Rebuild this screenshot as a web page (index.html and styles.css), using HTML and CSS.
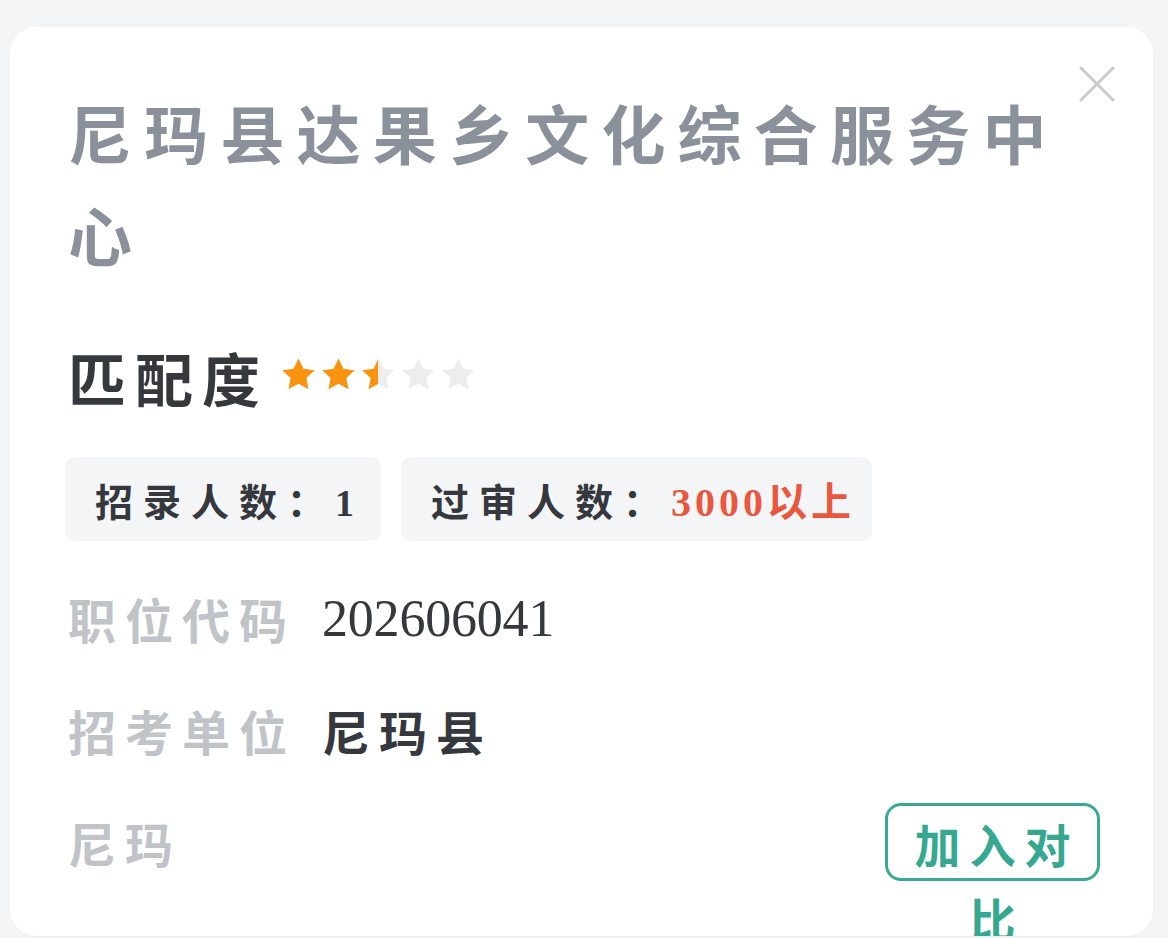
FILE: index.html
```html
<!DOCTYPE html>
<html>
<head>
    <meta charset="utf-8">
    <link rel="stylesheet" href="styles.css">
</head>
<body>

<div class="card">
    <svg class="close" width="36" height="36" viewBox="0 0 36 36">
        <path d="M2 2 L34 34 M34 2 L2 34" stroke="#c9cacd" stroke-width="3" stroke-linecap="round" fill="none"/>
    </svg>

    <h1 class="title">尼玛县达果乡文化综合服务中心</h1>

    <div class="match">
        <span class="match-label">匹配度</span>
        <div class="stars">
            <svg width="33" height="32" viewBox="2.4 2 19.2 18.4"><path class="star on" d="M12 2.2l2.9 6 6.5.8-4.8 4.5 1.2 6.5L12 16.9l-5.8 3.1 1.2-6.5L2.6 9l6.5-.8z"/></svg>
            <svg width="33" height="32" viewBox="2.4 2 19.2 18.4"><path class="star on" d="M12 2.2l2.9 6 6.5.8-4.8 4.5 1.2 6.5L12 16.9l-5.8 3.1 1.2-6.5L2.6 9l6.5-.8z"/></svg>
            <svg width="33" height="32" viewBox="2.4 2 19.2 18.4">
                <defs>
                    <linearGradient id="half">
                        <stop offset="50%" stop-color="#f7930f"/>
                        <stop offset="50%" stop-color="#ededed"/>
                    </linearGradient>
                </defs>
                <path fill="url(#half)" d="M12 2.2l2.9 6 6.5.8-4.8 4.5 1.2 6.5L12 16.9l-5.8 3.1 1.2-6.5L2.6 9l6.5-.8z"/>
            </svg>
            <svg width="33" height="32" viewBox="2.4 2 19.2 18.4"><path class="star" d="M12 2.2l2.9 6 6.5.8-4.8 4.5 1.2 6.5L12 16.9l-5.8 3.1 1.2-6.5L2.6 9l6.5-.8z"/></svg>
            <svg width="33" height="32" viewBox="2.4 2 19.2 18.4"><path class="star" d="M12 2.2l2.9 6 6.5.8-4.8 4.5 1.2 6.5L12 16.9l-5.8 3.1 1.2-6.5L2.6 9l6.5-.8z"/></svg>
        </div>
    </div>

    <div class="tags">
        <div class="tag">招录人数：1</div>
        <div class="tag">过审人数：<span class="hot">3000以上</span></div>
    </div>

    <div class="row">
        <span class="label">职位代码</span>
        <span class="value num">202606041</span>
    </div>
    <div class="row">
        <span class="label">招考单位</span>
        <span class="value">尼玛县</span>
    </div>
    <div class="row last">
        <span class="label">尼玛</span>
        <button class="compare">加入对比</button>
    </div>
</div>

</body>
</html>
```

FILE: styles.css
```css
body {
    margin: 0;
    padding: 27px 15px 0 10px;
    background-color: #f4f5f7;
    font-family: "Liberation Serif", "Noto Sans CJK SC", serif;
    overflow: hidden;
    height: 938px;
    box-sizing: border-box;
}
.card {
    position: relative;
    background-color: #fff;
    border-radius: 26px;
    height: 909px;
    padding: 60px 58px 0 58px;
    box-sizing: border-box;
    box-shadow: 0 1px 3px rgba(0,0,0,0.04);
    overflow: hidden;
}
.close {
    position: absolute;
    top: 39px;
    right: 38px;
}
.title {
    margin: 0;
    width: 1010px;
    font-size: 64px;
    line-height: 102px;
    letter-spacing: 12.2px;
    font-weight: 700;
    color: #8b919b;
}
.match {
    display: flex;
    align-items: center;
    margin-top: 51px;
    height: 70px;
}
.match-label {
    font-size: 58px;
    letter-spacing: 9px;
    font-weight: 700;
    color: #35383d;
}
.stars {
    display: flex;
    gap: 7px;
    margin-left: 13px;
    margin-top: -6px;
}
.star {
    fill: #ededed;
}
.star.on {
    fill: #f7930f;
}
.tags {
    display: flex;
    gap: 20px;
    margin: 45px 0 21px -3px;
}
.tag {
    height: 84px;
    display: flex;
    align-items: center;
    padding: 0 17px 0 30px;
    background-color: #f4f5f7;
    border-radius: 10px;
    font-size: 38px;
    letter-spacing: 10px;
    font-weight: 700;
    color: #35383d;
}
.tag .hot {
    color: #e9573f;
    letter-spacing: 4px;
    font-weight: 700;
    font-size: 40px;
}
.row {
    display: flex;
    align-items: center;
    height: 112px;
}
.label {
    font-size: 48px;
    letter-spacing: 9px;
    font-weight: 700;
    color: #c0c3c8;
    margin-right: 26px;
}
.value {
    font-size: 48px;
    letter-spacing: 9px;
    font-weight: 700;
    color: #35383d;
}
.value.num {
    font-size: 52px;
    letter-spacing: -0.2px;
    font-weight: 400;
}
.row.last {
    justify-content: space-between;
}
.compare {
    width: 215px;
    height: 78px;
    margin-right: -5px;
    padding: 0 0 0 9px;
    border: 3px solid #3aa993;
    border-radius: 16px;
    background: #fff;
    font-family: "Noto Sans CJK SC", sans-serif;
    font-size: 46px;
    line-height: 74px;
    letter-spacing: 9px;
    font-weight: 700;
    color: #36a890;
    text-align: center;
    overflow: visible;
    display: block;
    white-space: normal;
}
```
